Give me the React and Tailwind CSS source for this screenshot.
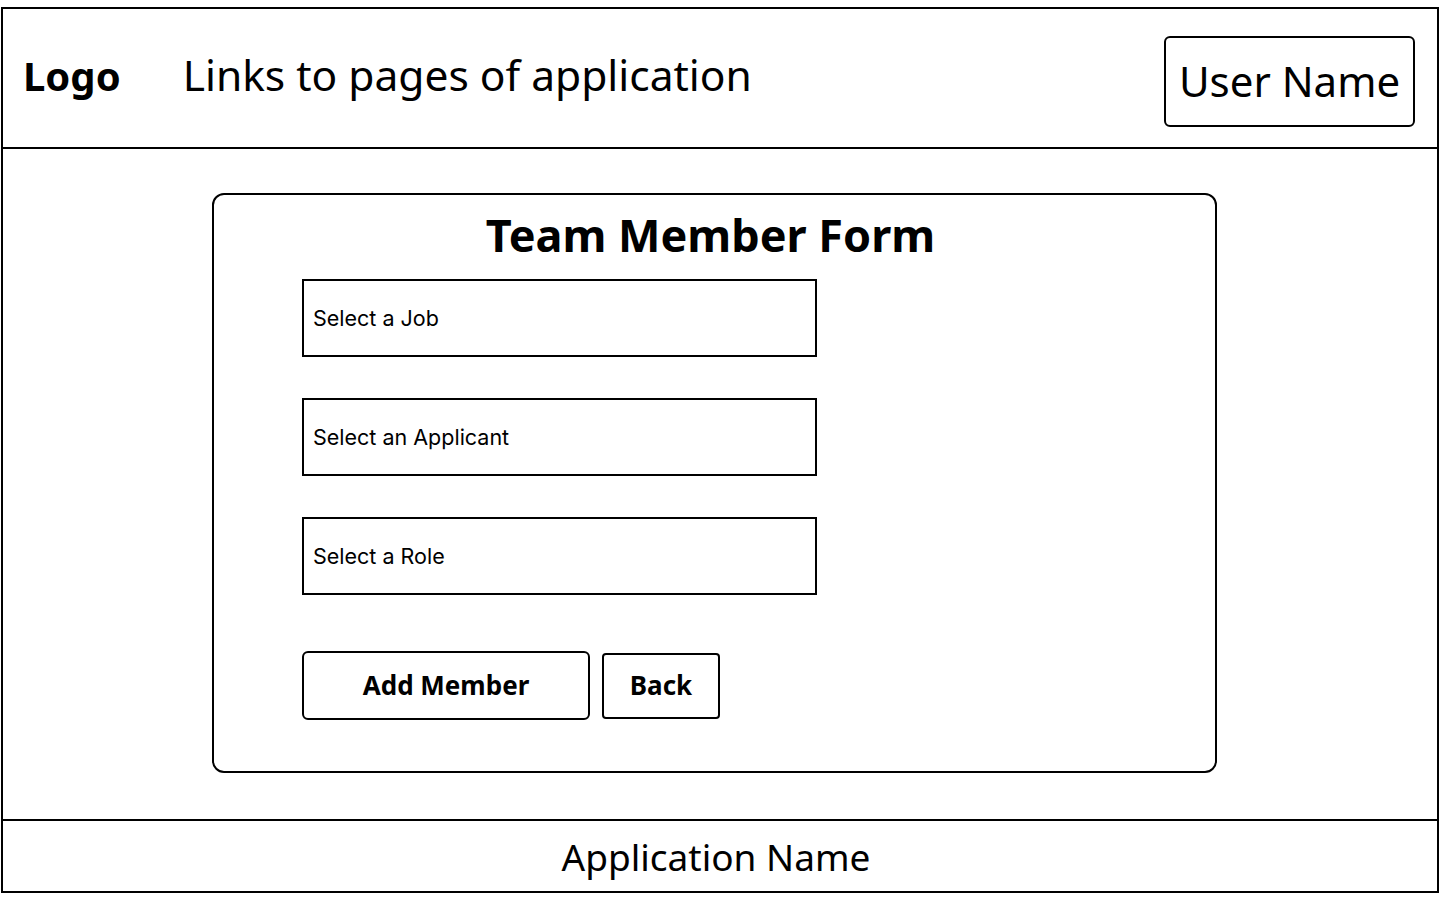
export default function App() {
  const font = { fontFamily: '"Noto Sans", "Open Sans", sans-serif' };
  const small = { fontFamily: 'Inter, "Noto Sans", sans-serif' };
  return (
    <div className="w-[1440px] h-[900px] bg-white text-black" style={font}>
      <div className="mt-[7px] ml-[1px] w-[1438px] h-[886px] border-2 border-black flex flex-col">
        {/* header */}
        <header className="h-[140px] border-b-2 border-black flex items-center pl-[20px] pr-[22px]">
          <div className="text-[40px] font-bold leading-none pb-[4px]">Logo</div>
          <nav className="ml-[62px] text-[42.5px] leading-none pb-[6px]">Links to pages of application</nav>
          <div className="ml-auto mt-[6px] w-[251px] h-[91px] border-2 border-black rounded-md flex items-center justify-center text-[42px] leading-none">
            User Name
          </div>
        </header>

        {/* main */}
        <main className="flex-1 pt-[44px]">
          <div className="ml-[209px] w-[1005px] h-[580px] border-2 border-black rounded-xl pt-[17px] pl-[88px]">
            <h1 className="text-[45px] font-bold leading-none text-center -ml-[88px] mr-[8px]">Team Member Form</h1>
            <div className="mt-[22px] flex flex-col gap-[41px]">
              {["Select a Job", "Select an Applicant", "Select a Role"].map((t) => (
                <div key={t} className="w-[515px] h-[78px] border-2 border-black flex items-center pl-[9px] text-[21.5px]" style={small}>
                  {t}
                </div>
              ))}
            </div>
            <div className="mt-[56px] flex items-center gap-[12px]">
              <button className="w-[288px] h-[69px] border-2 border-black rounded-md text-[26px] font-bold">Add Member</button>
              <button className="w-[118px] h-[66px] border-2 border-black rounded-[4px] text-[26px] font-bold">Back</button>
            </div>
          </div>
        </main>

        {/* footer */}
        <footer className="h-[72px] border-t-2 border-black flex items-center justify-center pr-[8px] text-[37px] leading-none">
          Application Name
        </footer>
      </div>
    </div>
  );
}
